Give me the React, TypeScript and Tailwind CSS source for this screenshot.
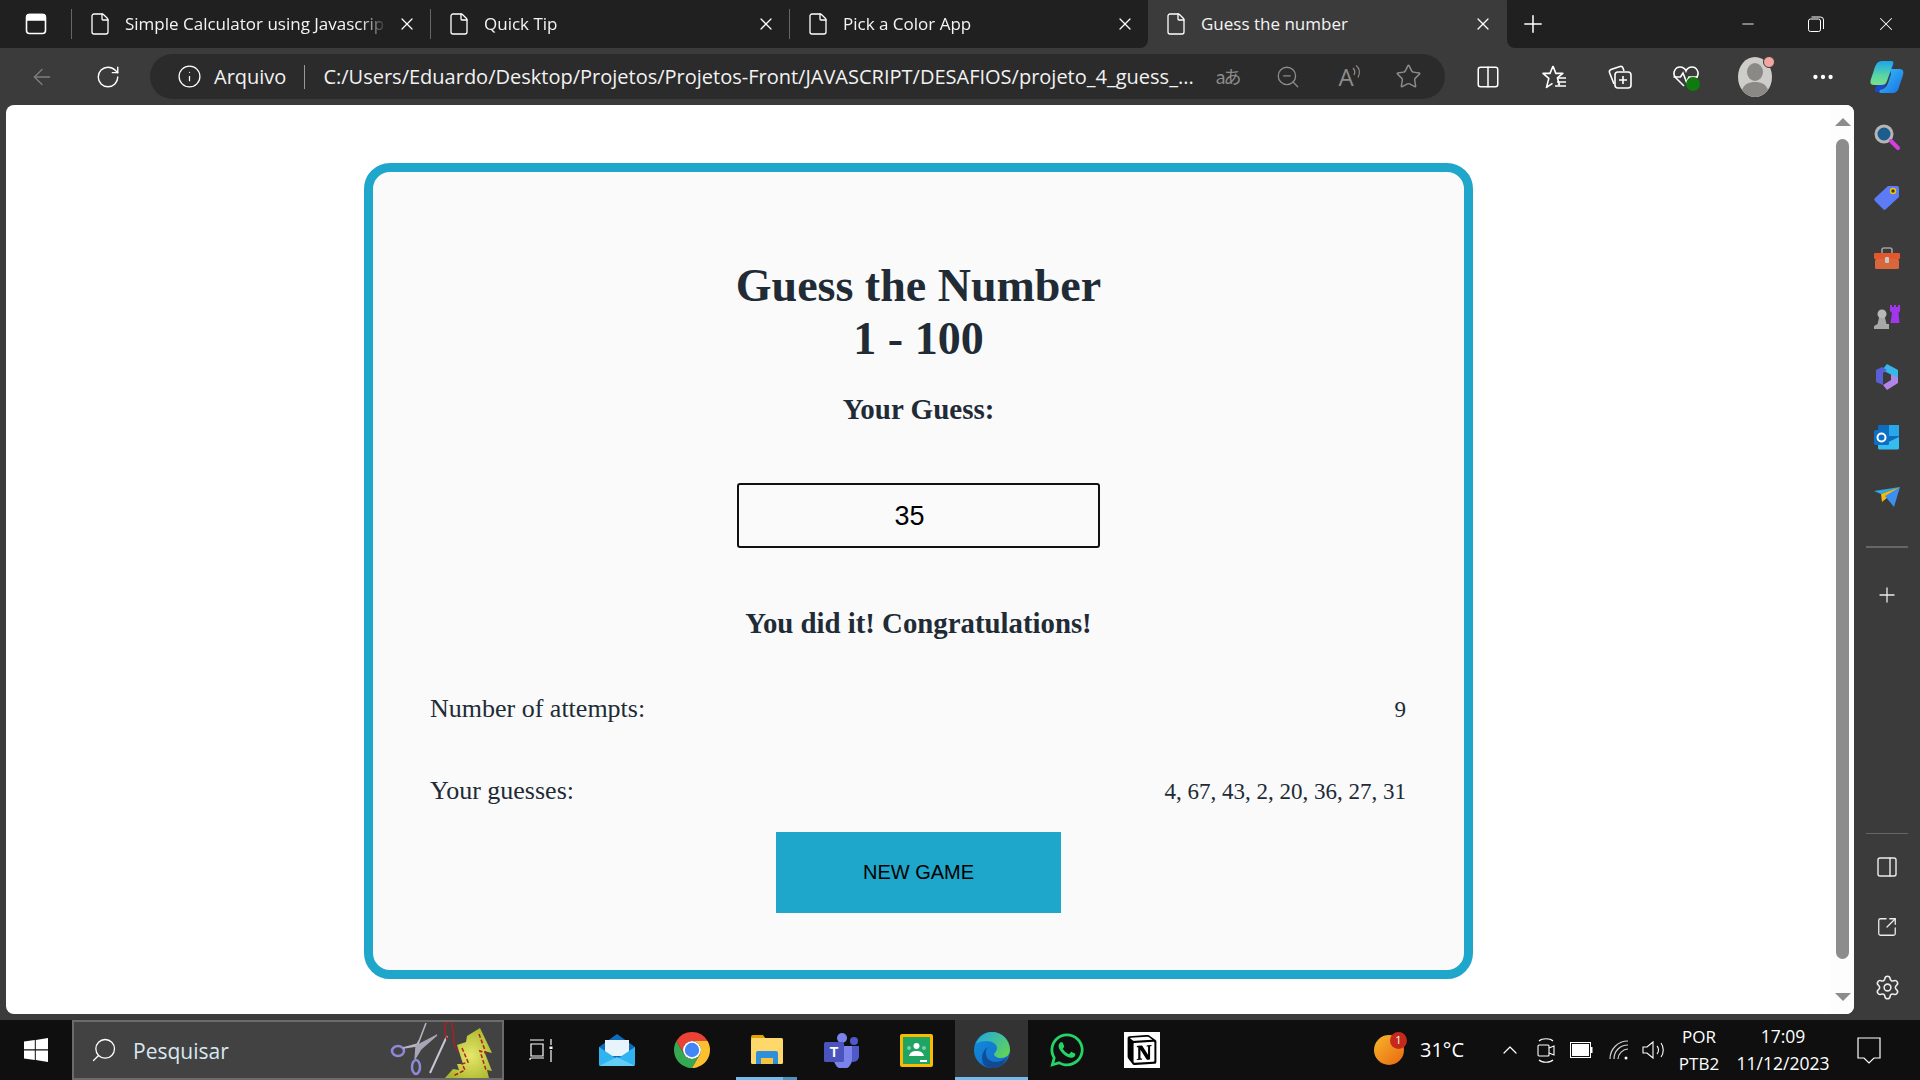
import { ArrowLeft, RotateCw, Info, ZoomOut, Star, Columns2, File, X, Plus, Minus, PanelRight, SquareArrowOutUpRight, Settings, ChevronUp, Search, Ellipsis } from 'lucide-react'
import { FaWhatsapp } from 'react-icons/fa'
import { SiNotion } from 'react-icons/si'

const UI_FONT = "font-['Open_Sans','Noto_Sans',sans-serif]"
const TABS = ['Simple Calculator using Javascrip', 'Quick Tip', 'Pick a Color App']

function PanelIcon() {
  return (
    <svg width="22" height="22" viewBox="0 0 22 22" fill="none" stroke="#fff" strokeWidth="1.6">
      <rect x="1.5" y="1.5" width="19" height="19" rx="3" />
      <path d="M2 3.5a2 2 0 0 1 2-2h14a2 2 0 0 1 2 2V7H2z" fill="#fff" />
    </svg>
  )
}

function RestoreIcon() {
  return (
    <svg width="16" height="16" viewBox="0 0 16 16" fill="none" stroke="#fff" strokeWidth="1">
      <rect x="0.5" y="3" width="12" height="12.5" rx="2" />
      <path d="M3.5 1h9a3 3 0 0 1 3 3v9" />
    </svg>
  )
}

function Tab({ title }: { title: string }) {
  return (
    <div className="w-[359px] h-full flex items-center shrink-0">
      <div className="w-px h-[30px] bg-[#666] mr-[16px]" />
      <File size={24} color="#fff" strokeWidth={1.3} className="shrink-0" />
      <span className="ml-[13px] w-[262px] text-[17px] text-[#f4f4f4] whitespace-nowrap [mask-image:linear-gradient(to_right,black_90%,transparent)]">{title}</span>
      <X size={20} color="#fff" strokeWidth={1.5} className="shrink-0 ml-[10px]" />
    </div>
  )
}

function TabStrip() {
  return (
    <div className="h-[48px] flex bg-[#3b3b3b]">
      <div className="flex-1 flex items-center bg-[#202020] rounded-br-[8px] pl-[25px]">
        <PanelIcon />
        <div className="w-[24px]" />
        <div className="flex h-full items-center">
          {TABS.map(t => <Tab key={t} title={t} />)}
        </div>
      </div>
      <div className="w-[359px] flex items-center pl-[16px] rounded-t-[8px] bg-[#3b3b3b] shrink-0">
        <File size={24} color="#fff" strokeWidth={1.3} className="shrink-0" />
        <span className="ml-[13px] w-[270px] text-[17px] text-[#f4f4f4]">Guess the number</span>
        <X size={20} color="#fff" strokeWidth={1.5} className="shrink-0 ml-[2px]" />
      </div>
      <div className="w-[414px] shrink-0 bg-[#202020] rounded-bl-[8px] flex items-center pl-[12px]">
        <Plus size={28} color="#fff" strokeWidth={1.3} />
        <div className="ml-[192px] flex items-center">
          <Minus size={18} color="#fff" strokeWidth={1.2} />
          <div className="ml-[51px]"><RestoreIcon /></div>
          <X size={22} color="#fff" strokeWidth={1.1} className="ml-[51px]" />
        </div>
      </div>
    </div>
  )
}

function ReadAloud() {
  return (
    <div className="w-[28px] h-[28px] flex items-center text-[#8c8c8c] text-[24px] leading-none">
      <span>A</span>
      <svg width="10" height="16" viewBox="0 0 10 16" fill="none" stroke="#8c8c8c" strokeWidth="1.3" className="-ml-[2px] -mt-[10px]">
        <path d="M1 4c2 2 2 5 1 7M4 1.5c4 3 4 8 2 12" />
      </svg>
    </div>
  )
}

function FavoritesIcon() {
  return (
    <svg width="28" height="28" viewBox="0 0 28 28" fill="none" stroke="#fff" strokeWidth="1.6" strokeLinejoin="round">
      <path d="M13 3l2.8 7.4h7l-5.4 4.4 2 7-1.4-1M13 3l-3 7.4H3l5.8 5-2.3 9 6-4" />
      <path d="M18 15h8M17 19h9M15 23h11" />
    </svg>
  )
}

function CollectionsIcon() {
  return (
    <svg width="28" height="28" viewBox="0 0 28 28" fill="none" stroke="#fff" strokeWidth="1.6">
      <path d="M8 21L3.5 9.5a2.5 2.5 0 0 1 1.5-3L14 3.5a2.5 2.5 0 0 1 3 1.5l1 3" />
      <rect x="9" y="9" width="16" height="16" rx="3" />
      <path d="M17 13v8M13 17h8" />
    </svg>
  )
}

function HealthIcon() {
  return (
    <div className="relative w-[28px] h-[28px]">
      <svg width="28" height="28" viewBox="0 0 28 28" fill="none" stroke="#fff" strokeWidth="1.6">
        <path d="M12 23L3.5 14.5C0 10.5 3 4 8 4c3 0 5 1.5 6 4 1-2.500 3-4 6-4 5 0 8 6.500 4.500 10.500" />
        <path d="M1.500 14h7l2.500-4 3.500 9 2.500-5h9" />
      </svg>
      <span className="absolute right-0 bottom-0 w-[14px] h-[14px] rounded-full bg-[#0f7b0f]" />
    </div>
  )
}

function Avatar() {
  return (
    <div className="relative w-[34px] h-[40px]">
      <svg width="34" height="40" viewBox="0 0 34 40">
        <ellipse cx="17" cy="20" rx="17" ry="20" fill="#cfcdc9" />
        <ellipse cx="17" cy="15" rx="8" ry="9" fill="#8b8986" />
        <path d="M4 33c2-6 7-8 13-8s11 2 13 8c-3 4-8 7-13 7s-10-3-13-7z" fill="#8b8986" />
      </svg>
      <span className="absolute -top-[1px] -right-[3px] w-[12px] h-[12px] rounded-full bg-[#f4a6a0] border border-[#3b3b3b]" />
    </div>
  )
}

function CopilotIcon() {
  return (
    <svg width="36" height="36" viewBox="0 0 36 36">
      <defs>
        <linearGradient id="cp1" x1="0" y1="0" x2="1" y2="1">
          <stop offset="0" stopColor="#35c3f3" />
          <stop offset="1" stopColor="#1b6fe8" />
        </linearGradient>
        <linearGradient id="cp2" x1="0" y1="0" x2="0" y2="1">
          <stop offset="0" stopColor="#1ba5ee" />
          <stop offset="0.6" stopColor="#58d5a5" />
          <stop offset="1" stopColor="#7be08a" />
        </linearGradient>
      </defs>
      <path d="M12 4h10c3 0 3 2 2 4l-9 22c-1 2-2 3-5 3H8c-3 0-2-3-1-5l8-20z" fill="#1e46c9" />
      <path d="M13 2h9c2 0 3 1 2 3l-6 17c-1 3-3 4-6 4H5c-4 0-4-3-3-6l3-9c1-4 3-9 8-9z" fill="url(#cp2)" />
      <path d="M20 10h11c3 0 4 3 3 6l-4 12c-1 4-3 6-7 6H12c-2 0-2-2-1-3 5-1 7-4 8-7l3-9c0-2-1-5-2-5z" fill="url(#cp1)" />
    </svg>
  )
}

function Toolbar() {
  return (
    <div className="h-[57px] flex items-center bg-[#3b3b3b] pl-[29px]">
      <ArrowLeft size={26} color="#7f7f7f" strokeWidth={1.2} className="shrink-0" />
      <RotateCw size={26} color="#fff" strokeWidth={1.3} className="ml-[40px] shrink-0" />
      <div className="ml-[29px] w-[1295px] h-[45px] rounded-full bg-[#2b2b2b] flex items-center pl-[27px] shrink-0">
        <Info size={25} color="#fff" strokeWidth={1.2} className="shrink-0" />
        <span className="ml-[12px] text-[20px] text-[#f2f2f2]">Arquivo</span>
        <div className="w-px h-[24px] bg-[#999] ml-[18px]" />
        <span className="ml-[18px] w-[875px] text-[20px] text-[#f2f2f2] whitespace-nowrap overflow-hidden">C:/Users/Eduardo/Desktop/Projetos/Projetos-Front/JAVASCRIPT/DESAFIOS/projeto_4_guess_...</span>
        <span className="ml-[17px] text-[18px] text-[#8c8c8c] font-['Noto_Sans_CJK_JP',sans-serif] tracking-[-2px]">aあ</span>
        <ZoomOut size={26} color="#8c8c8c" strokeWidth={1.2} className="ml-[35px] shrink-0" />
        <div className="ml-[38px]"><ReadAloud /></div>
        <Star size={27} color="#8c8c8c" strokeWidth={1.3} className="ml-[28px] shrink-0" />
      </div>
      <Columns2 size={26} color="#fff" strokeWidth={1.4} className="ml-[30px] shrink-0" />
      <div className="ml-[39px]"><FavoritesIcon /></div>
      <div className="ml-[38px]"><CollectionsIcon /></div>
      <div className="ml-[38px]"><HealthIcon /></div>
      <div className="ml-[38px]"><Avatar /></div>
      <Ellipsis size={26} color="#fff" strokeWidth={2} className="ml-[38px] shrink-0" />
      <div className="ml-[33px]"><CopilotIcon /></div>
    </div>
  )
}

function Row({ label, value }: { label: string; value: string }) {
  return (
    <div className="h-[36px] flex items-center justify-between text-[#212b36] leading-[36px]">
      <span className="text-[26px]">{label}</span>
      <span className="text-[23px] pr-px pt-[2px]">{value}</span>
    </div>
  )
}

function GameCard() {
  return (
    <div className="w-[1109px] h-[816px] mt-[58px] mx-auto border-[9px] border-[#1fa7cb] rounded-[26px] bg-[#fafafa] px-[57px] pt-[87px] font-['Liberation_Serif',serif] text-[#212b36] shrink-0">
      <h1 className="text-[46px] leading-[53px] font-bold text-center">Guess the Number<br />1 - 100</h1>
      <p className="mt-[28px] text-[29px] leading-[32px] font-bold text-center">Your Guess:</p>
      <div className="mt-[58px] flex justify-center">
        <div className="w-[363px] h-[65px] border-2 border-[#111] rounded-[3px] flex items-center justify-center pr-[18px] pt-[2px] font-['Liberation_Sans',sans-serif] text-[27px] text-black">35</div>
      </div>
      <p className="mt-[59px] text-[28.800px] leading-[32px] font-bold text-center">You did it! Congratulations!</p>
      <div className="mt-[52px]"><Row label="Number of attempts:" value="9" /></div>
      <div className="mt-[46px]"><Row label="Your guesses:" value="4, 67, 43, 2, 20, 36, 27, 31" /></div>
      <div className="mt-[23px] flex justify-center">
        <button className="w-[285px] h-[81px] pb-[2px] bg-[#1fa7cb] font-['Liberation_Sans',sans-serif] text-[20px] text-black">NEW GAME</button>
      </div>
    </div>
  )
}

function ScrollBar() {
  return (
    <div className="w-[23px] shrink-0 flex flex-col items-center bg-[#fdfdfd] pt-[13px] pb-[13px]">
      <div className="w-0 h-0 border-x-[8px] border-x-transparent border-b-[8px] border-b-[#8c8c8c]" />
      <div className="mt-[13px] w-[13px] flex-1 rounded-full bg-[#8c8c8c]" />
      <div className="mt-[34px] w-0 h-0 border-x-[8px] border-x-transparent border-t-[8px] border-t-[#8c8c8c]" />
    </div>
  )
}

function SideSearch() {
  return (
    <svg width="28" height="28" viewBox="0 0 28 28" fill="none">
      <circle cx="11" cy="11" r="8" fill="#1d5d8e" stroke="#b5b5b5" strokeWidth="3" />
      <path d="M18 18l7 7" stroke="#d63fdc" strokeWidth="4" strokeLinecap="round" />
    </svg>
  )
}

function SideTag() {
  return (
    <svg width="28" height="28" viewBox="0 0 28 28">
      <path d="M15 3h9a2 2 0 0 1 2 2v9L13 26a2 2 0 0 1-3 0L2 18a2 2 0 0 1 0-3z" fill="#5b7cf6" />
      <circle cx="20" cy="8" r="2.500" fill="#3b3b3b" stroke="#f5c400" strokeWidth="1.500" />
    </svg>
  )
}

function SideTools() {
  return (
    <svg width="28" height="24" viewBox="0 0 28 24" className="mt-[3px]">
      <path d="M9 6V3a2 2 0 0 1 2-2h6a2 2 0 0 1 2 2v3" fill="none" stroke="#a0a0a0" strokeWidth="1.600" />
      <rect x="1" y="6" width="26" height="6" rx="1" fill="#e2572b" />
      <rect x="2" y="12" width="24" height="10" rx="1.500" fill="#d9673d" />
      <rect x="12" y="10" width="4" height="6" rx="1" fill="#c8c8c8" />
    </svg>
  )
}

function SideChess() {
  return (
    <svg width="28" height="28" viewBox="0 0 28 28">
      <path d="M17 2h2v2h2V2h2v2h2V2h2v6l-1.500 2 1 10h-9l1.500-10L17 8z" fill="#a335ee" />
      <circle cx="9" cy="11" r="4.500" fill="#b8b8b8" />
      <path d="M6 15h6l1.500 6h2.500v5H1v-2c0-2 3-2 3.500-3z" fill="#a8a8a8" />
    </svg>
  )
}

function SideM365() {
  return (
    <svg width="26" height="28" viewBox="0 0 26 28">
      <path d="M13 1l11 6v9L16 11 8 7z" fill="#35b8e8" />
      <path d="M2 7l6-3 5 3-4 3v12l-7-3z" fill="#5a5fd6" />
      <path d="M9 22l8-5V11l7 4v5l-11 7z" fill="#b184e8" />
    </svg>
  )
}

function SideOutlook() {
  return (
    <svg width="26" height="26" viewBox="0 0 26 26">
      <rect x="4" y="1" width="21" height="24" rx="1.500" fill="#0f6cbd" />
      <rect x="15" y="1" width="10" height="11" fill="#28a8ea" />
      <path d="M4 13l10.500 5L25 13v11a1.500 1.500 0 0 1-1.500 1.500h-18A1.500 1.500 0 0 1 4 24z" fill="#36bdf0" />
      <rect x="0" y="6" width="15" height="15" rx="1.500" fill="#0c6fc4" />
      <circle cx="7.500" cy="13.500" r="4" fill="none" stroke="#fff" strokeWidth="2" />
    </svg>
  )
}

function SideSend() {
  return (
    <svg width="28" height="22" viewBox="0 0 28 22">
      <path d="M1 5L27 1 8 8z" fill="#2ea9ee" />
      <path d="M27 1L8 8l1 8z" fill="#f2b90f" />
      <path d="M27 1L12 10l9 11z" fill="#3c8ef0" />
    </svg>
  )
}

function SideBar() {
  const top = [<SideSearch key="s" />, <SideTag key="t" />, <SideTools key="b" />, <SideChess key="c" />, <SideM365 key="m" />, <SideOutlook key="o" />, <SideSend key="p" />]
  return (
    <div className="w-[66px] shrink-0 flex flex-col items-center pt-[2px]">
      {top.map(icon => (
        <div key={icon.key} className="h-[60px] flex items-center justify-center">{icon}</div>
      ))}
      <div className="mt-[19px] w-[42px] h-[2px] bg-[#666]" />
      <div className="mt-[27px] h-[60px] flex items-start justify-center pt-[8px]">
        <Plus size={24} color="#ececec" strokeWidth={1.3} />
      </div>
      <div className="mt-auto w-[42px] h-px bg-[#666]" />
      <div className="mt-[3px] h-[60px] flex items-center justify-center"><PanelRight size={24} color="#ececec" strokeWidth={1.4} /></div>
      <div className="h-[60px] flex items-center justify-center"><SquareArrowOutUpRight size={22} color="#ececec" strokeWidth={1.4} /></div>
      <div className="h-[60px] mb-[3px] flex items-center justify-center"><Settings size={27} color="#ececec" strokeWidth={1.4} /></div>
    </div>
  )
}

function WindowsLogo() {
  return (
    <svg width="24" height="24" viewBox="0 0 24 24" fill="#fff">
      <path d="M0 3.500l10.800-1.500v9.300H0zM11.800 1.900L24 0v11.300H11.800zM0 12.500h10.800v9.500L0 20.500zM11.800 12.500H24V24l-12.200-1.900z" />
    </svg>
  )
}

function SewingArt() {
  return (
    <svg width="115" height="56" viewBox="0 2 115 56" fill="none">
      <defs>
        <radialGradient id="tree" cx="0.55" cy="0.55" r="0.6">
          <stop offset="0" stopColor="#e6e86a" />
          <stop offset="1" stopColor="#a9b62c" />
        </radialGradient>
      </defs>
      <ellipse cx="11" cy="31" rx="6" ry="5" stroke="#8f88d8" strokeWidth="2.500" />
      <ellipse cx="29" cy="47" rx="4" ry="7" stroke="#8f88d8" strokeWidth="2.500" />
      <path d="M16 28L31 24 39 3 33 19 29 26z" fill="#b9b6c4" stroke="#b9b6c4" strokeWidth="1.500" />
      <path d="M28 39L29 26 50 15 34 29z" fill="#a9a6b6" stroke="#a9a6b6" strokeWidth="1.200" />
      <path d="M43 53L60 16" stroke="#c9c4d6" strokeWidth="2" />
      <path d="M60 20C56 10 58 1 62 1c5 0 4 16 5 22 1 8 8 12 14 9 8-3 12-10 14-16" stroke="#a92020" strokeWidth="1.500" />
      <path d="M93 8L105 33 97 31 105 51 100 50 102 58H58L66 49 72 50 70 44 76 44 70 25 79 22 80 16z" fill="url(#tree)" />
      <path d="M92 14L99 33 93 31 99 50M75 28L81 42 75 44 78 50 66 56" stroke="#b3201c" strokeWidth="1.500" strokeDasharray="4 2" />
    </svg>
  )
}

function MailIcon() {
  return (
    <svg width="36" height="36" viewBox="0 0 36 36">
      <path d="M18 2l18 13v17a2 2 0 0 1-2 2H2a2 2 0 0 1-2-2V15z" fill="#0f6cbd" />
      <path d="M6 8h24v16H6z" fill="#e8f4fc" />
      <path d="M0 15l18 12 18-12v17a2 2 0 0 1-2 2H2a2 2 0 0 1-2-2z" fill="#2fb4f0" />
      <path d="M0 34l18-9 18 9z" fill="#63cdf5" />
    </svg>
  )
}

function ChromeIcon() {
  return (
    <svg width="36" height="36" viewBox="4 4 40 40">
      <path d="M24 4A20 20 0 0 1 41.320 14H24A10 10 0 0 0 15.340 29L6.680 14A20 20 0 0 1 24 4z" fill="#ea4335" />
      <path d="M6.680 14L15.340 29A10 10 0 0 0 32.660 29L24 44A20 20 0 0 1 6.680 14z" fill="#34a853" />
      <path d="M41.320 14A20 20 0 0 1 24 44L32.660 29A10 10 0 0 0 24 14z" fill="#fbc02d" />
      <circle cx="24" cy="24" r="10" fill="#fff" />
      <circle cx="24" cy="24" r="8" fill="#4285f4" />
    </svg>
  )
}

function FilesIcon() {
  return (
    <svg width="32" height="32" viewBox="0 0 32 32">
      <path d="M0 3a2 2 0 0 1 2-2h10l3 4H0z" fill="#e2a300" />
      <rect y="4" width="32" height="26" rx="1.500" fill="#ffd86b" />
      <path d="M5 30V19a2 2 0 0 1 2-2h18a2 2 0 0 1 2 2v11h-5v-6H10v6z" fill="#2f8fdc" />
      <rect x="10" y="24" width="12" height="6" fill="#f5c542" />
    </svg>
  )
}

function TeamsIcon() {
  return (
    <div className="relative w-[36px] h-[36px]">
      <svg width="36" height="36" viewBox="0 0 36 36">
        <circle cx="18" cy="6" r="5" fill="#7b83eb" />
        <circle cx="30" cy="9" r="4" fill="#5059c9" />
        <path d="M24 14h11v11a6 6 0 0 1-11 2z" fill="#5059c9" />
        <path d="M10 14h18v14a8 8 0 0 1-18 0z" fill="#7b83eb" />
        <rect y="10" width="20" height="20" rx="1.500" fill="#4b53bc" />
      </svg>
      <span className="absolute left-0 top-[10px] w-[20px] h-[20px] flex items-center justify-center text-[14px] font-bold text-white font-['Liberation_Sans',sans-serif]">T</span>
    </div>
  )
}

function ClassroomIcon() {
  return (
    <svg width="33" height="33" viewBox="0 0 33 33">
      <rect width="33" height="33" rx="2" fill="#f9ba00" />
      <rect x="3" y="3" width="27" height="27" fill="#1fa463" />
      <circle cx="16.500" cy="12" r="3" fill="#fff" />
      <path d="M9 22c1-4 4-5 7.500-5s6.500 1 7.500 5z" fill="#fff" />
      <circle cx="9" cy="14" r="2" fill="#7ccfa3" />
      <circle cx="24" cy="14" r="2" fill="#7ccfa3" />
      <rect x="20" y="26" width="7" height="2" fill="#fff" />
    </svg>
  )
}

function EdgeIcon() {
  return (
    <svg width="36" height="36" viewBox="0 0 36 36">
      <defs>
        <linearGradient id="eg1" x1="0" y1="0" x2="1" y2="0.700">
          <stop offset="0" stopColor="#1ea6e8" />
          <stop offset="1" stopColor="#5fd25a" />
        </linearGradient>
        <linearGradient id="eg2" x1="0" y1="0" x2="1" y2="1">
          <stop offset="0" stopColor="#0f8fdc" />
          <stop offset="1" stopColor="#1767c4" />
        </linearGradient>
      </defs>
      <circle cx="18" cy="18" r="18" fill="url(#eg2)" />
      <path d="M2 12C5 4 11 0 18 0c10 0 18 8 18 18 0 5-4 8-9 8-4 0-7-2-7-4 1-2 3-3 3-6 0-4-5-7-10-7-5 0-9 1-11 3z" fill="url(#eg1)" />
      <path d="M14 15c-3 3-3 9 1 13 4 4 12 5 17 1-3 4-8 7-14 7-3 0-6-1-8-3-3-4-3-14 4-18z" fill="#0f4c9c" />
      <path d="M15 28c5 3 12 3 18-3-2 6-9 11-15 11-3 0-4-4-3-8z" fill="#134a8e" />
    </svg>
  )
}

function WeatherIcon() {
  return (
    <div className="relative w-[30px] h-[30px]">
      <div className="w-[30px] h-[30px] rounded-full bg-gradient-to-br from-[#f5b62a] to-[#e8650f]" />
      <span className="absolute -top-[3px] -right-[3px] w-[17px] h-[17px] rounded-full bg-[#c4291c] text-white text-[11px] flex items-center justify-center">1</span>
    </div>
  )
}

function CameraIcon() {
  return (
    <svg width="18" height="26" viewBox="0 0 18 26" fill="none" stroke="#fff" strokeWidth="1.100">
      <rect x="1" y="8" width="11" height="11" rx="1" />
      <path d="M12 11l5-2v9l-5-2M2 4c3-3 11-3 14 0M2 23c3 3 11 3 14 0" />
    </svg>
  )
}

function BatteryIcon() {
  return (
    <svg width="23" height="16" viewBox="0 0 23 16">
      <rect x="0.500" y="0.500" width="20" height="15" fill="none" stroke="#fff" />
      <rect x="2" y="2" width="17" height="12" fill="#fff" />
      <rect x="21" y="5" width="1.500" height="6" fill="#fff" />
    </svg>
  )
}

function WifiIcon() {
  return (
    <svg width="20" height="20" viewBox="0 0 20 20" fill="none" stroke="#d0d0d0" strokeWidth="1.200">
      <path d="M1 19C1 9 9 1 19 1M5 19C5 11 11 5 19 5M9 19c0-5 5-10 10-10" />
      <circle cx="17" cy="18" r="1.500" fill="#fff" stroke="none" />
    </svg>
  )
}

function SpeakerIcon() {
  return (
    <svg width="24" height="20" viewBox="0 0 24 20" fill="none" stroke="#fff" strokeWidth="1.100">
      <path d="M1 7h4l6-5v16l-6-5H1zM15 6c2 2 2 6 0 8M19 3c3 4 3 10 0 14" />
    </svg>
  )
}

function TaskView() {
  return (
    <svg width="24" height="24" viewBox="0 0 24 24" fill="none" stroke="#fff" strokeWidth="1.200">
      <path d="M1 2h14M1 22V21a1 1 0 0 1 1-1h13M2 6h12v12H2zM22 1v6M22 12v12" />
      <rect x="20.500" y="8.500" width="3" height="2.500" fill="#fff" stroke="none" />
    </svg>
  )
}

function TaskBar() {
  return (
    <div className={`h-[60px] flex items-center bg-[#0f0f0f] ${UI_FONT}`}>
      <div className="w-[72px] flex justify-center shrink-0"><WindowsLogo /></div>
      <div className="w-[432px] h-[60px] shrink-0 flex items-center border-2 border-[#6b6b6b] bg-[#424242] pl-[16px] overflow-hidden">
        <Search size={28} color="#fff" strokeWidth={1.1} className="scale-x-[-1] shrink-0" />
        <span className="ml-[15px] mt-[3px] text-[21px] text-[#d8e8f0]">Pesquisar</span>
        <div className="ml-auto"><SewingArt /></div>
      </div>
      <div className="ml-[25px] shrink-0"><TaskView /></div>
      <div className="ml-[46px] shrink-0"><MailIcon /></div>
      <div className="ml-[39px] shrink-0"><ChromeIcon /></div>
      <div className="ml-[26px] w-[61px] h-full shrink-0 flex flex-col items-center justify-end">
        <FilesIcon />
        <div className="mt-[11px] h-[3px] w-full flex bg-[#76b9ed]"><div className="ml-auto w-[14px] bg-[#4f93bd]" /></div>
      </div>
      <div className="ml-[27px] shrink-0"><TeamsIcon /></div>
      <div className="ml-[40px] shrink-0"><ClassroomIcon /></div>
      <div className="ml-[22px] w-[73px] h-full shrink-0 bg-[#333] flex flex-col items-center justify-end">
        <EdgeIcon />
        <div className="mt-[9px] h-[3px] w-full bg-[#76b9ed]" />
      </div>
      <div className="ml-[20px] shrink-0"><FaWhatsapp size={38} color="#25d366" /></div>
      <div className="ml-[38px] w-[36px] h-[36px] bg-white shrink-0 flex items-center justify-center"><SiNotion size={30} color="#000" /></div>
      <div className="ml-[214px] shrink-0"><WeatherIcon /></div>
      <span className="ml-[16px] text-[20px] text-white w-[60px] shrink-0">31°C</span>
      <ChevronUp size={24} color="#fff" strokeWidth={1.2} className="ml-[18px] shrink-0" />
      <div className="ml-[15px] shrink-0"><CameraIcon /></div>
      <div className="ml-[15px] shrink-0"><BatteryIcon /></div>
      <div className="ml-[16px] shrink-0"><WifiIcon /></div>
      <div className="ml-[13px] shrink-0"><SpeakerIcon /></div>
      <div className="ml-[10px] w-[46px] shrink-0 flex flex-col items-center text-[17px] leading-[27px] text-white">
        <span>POR</span>
        <span>PTB2</span>
      </div>
      <div className="ml-[11px] w-[100px] shrink-0 flex flex-col items-center text-[17.500px] leading-[27px] text-white">
        <span>17:09</span>
        <span className="whitespace-nowrap">11/12/2023</span>
      </div>
      <svg width="24" height="27" viewBox="0 0 24 27" fill="none" stroke="#fff" strokeWidth="1.200" className="ml-[24px] shrink-0">
        <path d="M1 1h22v20h-6l-5 5-5-5H1z" />
      </svg>
    </div>
  )
}

export default function App() {
  return (
    <div className={`w-[1920px] h-[1080px] overflow-hidden flex flex-col bg-[#3b3b3b] ${UI_FONT}`}>
      <TabStrip />
      <Toolbar />
      <div className="flex-1 flex min-h-0 pl-[6px]">
        <div className="flex-1 flex flex-col min-h-0">
          <div className="h-[909px] flex rounded-[8px] bg-white overflow-hidden">
            <div className="flex-1 flex flex-col"><GameCard /></div>
            <ScrollBar />
          </div>
        </div>
        <SideBar />
      </div>
      <TaskBar />
    </div>
  )
}
